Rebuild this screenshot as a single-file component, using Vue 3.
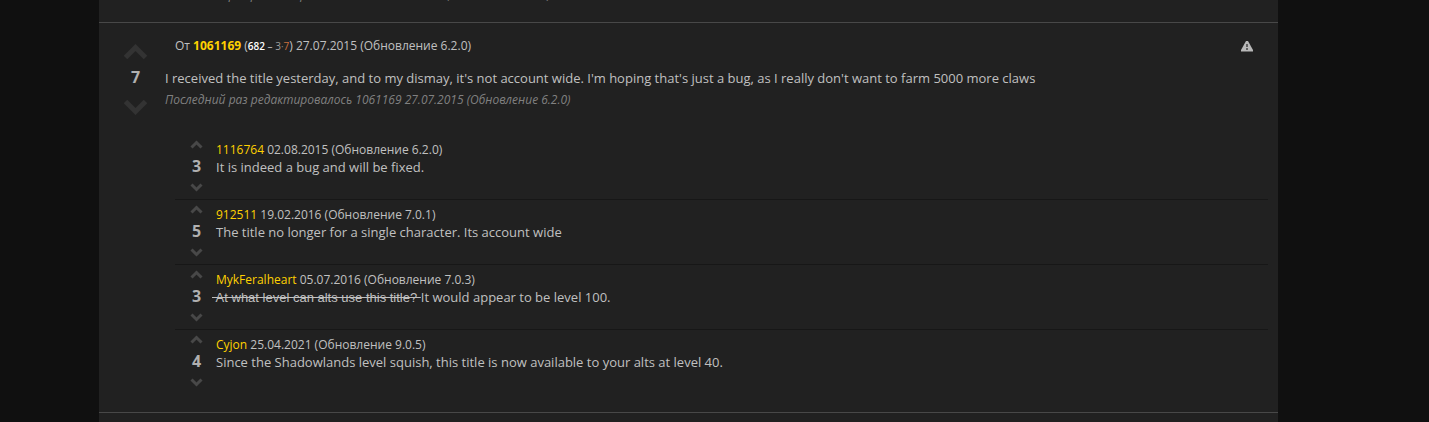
<script setup>
const replies = [
  { id: 1, score: 3, author: '1116764', meta: '02.08.2015 (Обновление 6.2.0)', text: 'It is indeed a bug and will be fixed.' },
  { id: 2, score: 5, author: '912511', meta: '19.02.2016 (Обновление 7.0.1)', text: 'The title no longer for a single character. Its account wide' },
  { id: 3, score: 3, author: 'MykFeralheart', meta: '05.07.2016 (Обновление 7.0.3)', struck: '\u00a0At what level can alts use this title?\u00a0', text: 'It would appear to be level 100.' },
  { id: 4, score: 4, author: 'Cyjon', meta: '25.04.2021 (Обновление 9.0.5)', text: 'Since the Shadowlands level squish, this title is now available to your alts at level 40.' }
]
</script>

<template>
  <main class="panel">
    <p class="edited previous">Последний раз редактировалось 1711 24.07.2015 (Обновление 6.1.2)</p>

    <article class="comment">
      <div class="votes">
        <button type="button" aria-label="Upvote">
          <svg viewBox="0 0 25 17"><path d="M2.5 14.5 12.5 4.5 22.5 14.5" /></svg>
        </button>
        <b class="score">7</b>
        <button type="button" aria-label="Downvote">
          <svg viewBox="0 0 25 17"><path d="M2.5 2.5 12.5 12.5 22.5 2.5" /></svg>
        </button>
      </div>

      <div class="main">
        <header class="head">
          <span>От <a href="#" class="author">1061169</a> (<small><b class="rep">682</b> – <span class="silver">3</span><span class="dot">·</span><span class="copper">7</span></small>) 27.07.2015 (Обновление 6.2.0)</span>
          <button type="button" class="report" aria-label="Report">
            <svg viewBox="0 0 12 11">
              <path class="tri" d="M5 0h2l5 9v1.5H0V9z" />
              <path class="mark" d="M5 3h2v3H5zM5 7h2v2H5z" />
            </svg>
          </button>
        </header>
        <p class="body">I received the title yesterday, and to my dismay, it's not account wide. I'm hoping that's just a bug, as I really don't want to farm 5000 more claws</p>
        <p class="edited">Последний раз редактировалось 1061169 27.07.2015 (Обновление 6.2.0)</p>

        <ul class="replies">
          <li v-for="r in replies" :key="r.id" class="reply">
            <div class="votes small">
              <button type="button" aria-label="Upvote reply">
                <svg viewBox="0 0 13 9"><path d="M1.5 7.5 6.5 2.5 11.5 7.5" /></svg>
              </button>
              <b class="score">{{ r.score }}</b>
              <button type="button" aria-label="Downvote reply">
                <svg viewBox="0 0 13 9"><path d="M1.5 1.5 6.5 6.5 11.5 1.5" /></svg>
              </button>
            </div>
            <div>
              <div class="reply-head"><a href="#">{{ r.author }}</a> {{ r.meta }}</div>
              <p class="reply-text"><s v-if="r.struck">{{ r.struck }}</s>{{ r.text }}</p>
            </div>
          </li>
        </ul>
      </div>
    </article>
  </main>
</template>

<style>
body {
  background: #101010;
  overflow: hidden;
}
</style>

<style scoped>
.panel {
  display: flow-root;
  margin: 0 151px 0 99px;
  padding-bottom: 20px;
  background: #212121;
  color: #c0c0c0;
  font: 12px/18px "Open Sans", sans-serif;
}
p { margin: 0; }
a { color: #ffd100; text-decoration: none; }
button {
  display: block;
  padding: 0;
  border: 0;
  background: none;
  cursor: pointer;
}
svg { display: block; }
.edited {
  color: #808080;
  font-style: italic;
}
.previous { margin: -14px 0 18px 66px; }
.comment {
  display: flex;
  border-top: 1px solid #484848;
  border-bottom: 1px solid #484848;
  padding: 14px 10px 17px 24px;
}
.votes {
  display: flex;
  flex-direction: column;
  align-items: center;
  width: 25px;
  padding-top: 6px;
}
.votes svg {
  width: 25px;
  height: 17px;
  fill: none;
  stroke: #333;
  stroke-width: 5px;
}
.score {
  font-size: 16px;
  line-height: 24px;
  margin: 5px 0 10px;
  color: #b0b0b0;
}
.main {
  flex: 1;
  margin-left: 17px;
}
.head {
  display: flex;
  justify-content: space-between;
  align-items: center;
  padding: 0 15px 0 10px;
}
.author { font-weight: bold; }
small { font-size: 10px; }
.rep { color: #fff; font-weight: 600; }
.silver { color: #a0a0a0; }
.dot { color: #808080; }
.copper { color: #c9703d; }
.report svg {
  width: 12px;
  height: 11px;
}
.tri { fill: #b8b8b8; }
.mark { fill: #606060; }
.body {
  margin-top: 13px;
  font-size: 13px;
  line-height: 20px;
}
.body + .edited { margin-top: 3px; }
.replies {
  list-style: none;
  margin: 26px 0 0 10px;
  padding: 0;
}
.reply {
  display: flex;
  gap: 13px;
  height: 65px;
  box-sizing: border-box;
  border-bottom: 1px solid #171717;
}
.reply:last-child { border-bottom: 0; }
.small {
  width: 13px;
  padding-top: 5px;
  margin-left: 15px;
}
.small svg {
  width: 13px;
  height: 9px;
  stroke: #484848;
  stroke-width: 3px;
}
.small .score { margin: 6px 0 5px; line-height: 23px; }
.reply-head { margin-top: 6px; }
.reply-text {
  font-size: 13px;
  line-height: 16px;
}
s {
  margin-left: -4px;
  font-family: "Liberation Sans", Arial, sans-serif;
}
</style>
